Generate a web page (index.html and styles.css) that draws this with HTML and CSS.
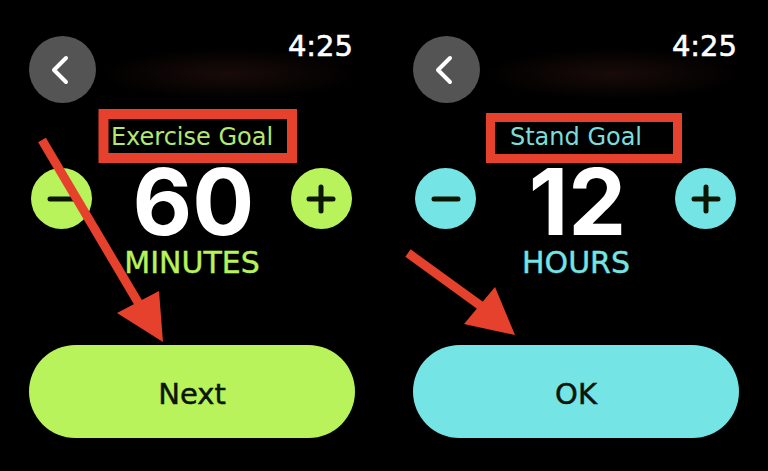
FILE: index.html
```html
<!DOCTYPE html>
<html lang="en">

<head>
    <meta charset="UTF-8">
    <meta name="viewport" content="width=device-width, initial-scale=1.0">
    <title>Activity Goals</title>
    <link rel="stylesheet" href="styles.css">
</head>

<body>
    <main class="screens">
        <!-- شاشة هدف التمرين -->
        <section class="screen exercise">
            <header class="top-bar">
                <button class="back" aria-label="Back">
                    <svg width="20" height="30" viewBox="0 0 20 30">
                        <polyline points="15,3 3,15 15,27" fill="none" stroke="#fff" stroke-width="4"
                            stroke-linecap="round" stroke-linejoin="round" />
                    </svg>
                </button>
                <span class="clock">4:25</span>
            </header>
            <h2 class="goal-title">Exercise Goal</h2>
            <div class="stepper">
                <button class="step" aria-label="Decrease">
                    <svg width="30" height="30" viewBox="0 0 30 30">
                        <line x1="3" y1="15" x2="27" y2="15" />
                    </svg>
                </button>
                <span class="value">60</span>
                <button class="step" aria-label="Increase">
                    <svg width="30" height="30" viewBox="0 0 30 30">
                        <line x1="3" y1="15" x2="27" y2="15" />
                        <line x1="15" y1="3" x2="15" y2="27" />
                    </svg>
                </button>
            </div>
            <div class="unit">MINUTES</div>
            <button class="primary">Next</button>
        </section>

        <!-- شاشة هدف الوقوف -->
        <section class="screen stand">
            <header class="top-bar">
                <button class="back" aria-label="Back">
                    <svg width="20" height="30" viewBox="0 0 20 30">
                        <polyline points="15,3 3,15 15,27" fill="none" stroke="#fff" stroke-width="4"
                            stroke-linecap="round" stroke-linejoin="round" />
                    </svg>
                </button>
                <span class="clock">4:25</span>
            </header>
            <h2 class="goal-title">Stand Goal</h2>
            <div class="stepper">
                <button class="step" aria-label="Decrease">
                    <svg width="30" height="30" viewBox="0 0 30 30">
                        <line x1="3" y1="15" x2="27" y2="15" />
                    </svg>
                </button>
                <span class="value">12</span>
                <button class="step" aria-label="Increase">
                    <svg width="30" height="30" viewBox="0 0 30 30">
                        <line x1="3" y1="15" x2="27" y2="15" />
                        <line x1="15" y1="3" x2="15" y2="27" />
                    </svg>
                </button>
            </div>
            <div class="unit">HOURS</div>
            <button class="primary">OK</button>
        </section>

        <!-- العلامات الحمراء فوق الشاشتين -->
        <svg class="annotations" width="768" height="471" viewBox="0 0 768 471">
            <g fill="none" stroke="#e5412d">
                <rect x="103.5" y="114" width="188.5" height="44" stroke-width="10" />
                <rect x="490.5" y="117.5" width="187" height="41" stroke-width="9" />
                <line x1="42" y1="140" x2="139" y2="304" stroke-width="9" />
                <line x1="408" y1="253" x2="481" y2="306" stroke-width="9" />
            </g>
            <g fill="#e5412d">
                <polygon points="163,342 117,313 159,291" />
                <polygon points="515,335 464,324 495,287" />
            </g>
        </svg>
    </main>
</body>

</html>
```

FILE: styles.css
```css
/* إعدادات الصفحة العامة */
body {
    margin: 0;
    padding: 0;
    background: #000;
    font-family: "DejaVu Sans", Arial, sans-serif;
    overflow: hidden;
}

.screens {
    position: relative;
    display: grid;
    grid-template-columns: 384px 384px;
    height: 471px;
}

/* ألوان كل شاشة */
.exercise {
    --accent: #b8f35b;
    --label: #b2e872;
}

.stand {
    --accent: #74e4e4;
    --label: #7bdcd8;
}

.screen {
    display: flex;
    flex-direction: column;
    padding: 36px 29px 0;
}

button {
    border: none;
    padding: 0;
    font-family: inherit;
    cursor: pointer;
}

/* الشريط العلوي */
.top-bar {
    display: flex;
    justify-content: space-between;
    align-items: flex-start;
    background: radial-gradient(ellipse 130px 26px at 200px 38px, rgba(70, 32, 26, 0.35), transparent);
}

.back {
    width: 67px;
    height: 67px;
    border-radius: 50%;
    background: #545454;
    display: flex;
    align-items: center;
    justify-content: center;
    padding-right: 3px;
}

.clock {
    color: #fff;
    font-size: 29px;
    line-height: 29px;
    margin-top: -4px;
    margin-right: 2px;
    -webkit-text-stroke: 0.6px #fff;
}

.goal-title {
    margin: 20px 0 0;
    color: var(--label);
    font-size: 24px;
    font-weight: normal;
    line-height: 28px;
    text-align: center;
}

/* أزرار الزيادة والنقصان */
.stepper {
    display: flex;
    justify-content: space-between;
    align-items: flex-start;
    margin-top: 17px;
    padding: 0 3px 0 2px;
}

.step {
    width: 61px;
    height: 61px;
    border-radius: 50%;
    background: var(--accent);
    display: flex;
    align-items: center;
    justify-content: center;
}

.step svg {
    stroke: #0b1500;
    stroke-width: 5;
    stroke-linecap: round;
}

.value {
    color: #fff;
    font-family: Inter, "DejaVu Sans", sans-serif;
    font-weight: 700;
    font-size: 92px;
    line-height: 68px;
    margin-left: 4px;
}

.unit {
    margin-top: 12px;
    color: var(--accent);
    font-size: 30px;
    line-height: 30px;
    text-align: center;
    -webkit-text-stroke: 0.4px var(--accent);
}

.primary {
    margin-top: 67px;
    height: 93px;
    border-radius: 47px;
    background: var(--accent);
    color: #0d1408;
    font-size: 29px;
    padding-top: 4px;
    -webkit-text-stroke: 0.5px #0d1408;
}

.annotations {
    position: absolute;
    top: 0;
    left: 0;
    pointer-events: none;
}
```
